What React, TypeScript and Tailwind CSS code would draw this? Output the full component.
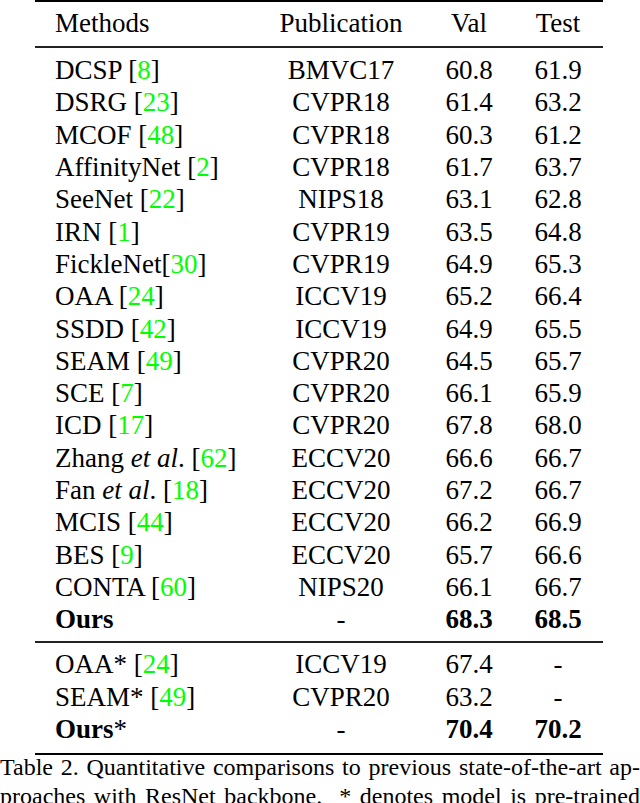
import React from "react";

type Row = {
  name: React.ReactNode;
  cite?: string;
  citeNoSpace?: boolean;
  pub: string;
  val: string;
  test: string;
  bold?: boolean;
};

const Cite = ({ n }: { n: string }) => (
  <>
    [<span className="text-[#00ff00]">{n}</span>]
  </>
);

const main: Row[] = [
  { name: "DCSP", cite: "8", pub: "BMVC17", val: "60.8", test: "61.9" },
  { name: "DSRG", cite: "23", pub: "CVPR18", val: "61.4", test: "63.2" },
  { name: "MCOF", cite: "48", pub: "CVPR18", val: "60.3", test: "61.2" },
  { name: "AffinityNet", cite: "2", pub: "CVPR18", val: "61.7", test: "63.7" },
  { name: "SeeNet", cite: "22", pub: "NIPS18", val: "63.1", test: "62.8" },
  { name: "IRN", cite: "1", pub: "CVPR19", val: "63.5", test: "64.8" },
  { name: "FickleNet", cite: "30", citeNoSpace: true, pub: "CVPR19", val: "64.9", test: "65.3" },
  { name: "OAA", cite: "24", pub: "ICCV19", val: "65.2", test: "66.4" },
  { name: "SSDD", cite: "42", pub: "ICCV19", val: "64.9", test: "65.5" },
  { name: "SEAM", cite: "49", pub: "CVPR20", val: "64.5", test: "65.7" },
  { name: "SCE", cite: "7", pub: "CVPR20", val: "66.1", test: "65.9" },
  { name: "ICD", cite: "17", pub: "CVPR20", val: "67.8", test: "68.0" },
  {
    name: (
      <>
        Zhang <i>et al</i>.
      </>
    ),
    cite: "62",
    pub: "ECCV20",
    val: "66.6",
    test: "66.7",
  },
  {
    name: (
      <>
        Fan <i>et al</i>.
      </>
    ),
    cite: "18",
    pub: "ECCV20",
    val: "67.2",
    test: "66.7",
  },
  { name: "MCIS", cite: "44", pub: "ECCV20", val: "66.2", test: "66.9" },
  { name: "BES", cite: "9", pub: "ECCV20", val: "65.7", test: "66.6" },
  { name: "CONTA", cite: "60", pub: "NIPS20", val: "66.1", test: "66.7" },
  { name: "Ours", pub: "-", val: "68.3", test: "68.5", bold: true },
];

const extra: Row[] = [
  { name: "OAA*", cite: "24", pub: "ICCV19", val: "67.4", test: "-" },
  { name: "SEAM*", cite: "49", pub: "CVPR20", val: "63.2", test: "-" },
  {
    name: (
      <>
        <b>Ours</b>*
      </>
    ),
    pub: "-",
    val: "70.4",
    test: "70.2",
  },
];

const grid = "grid grid-cols-[215px_142px_114px_64px] pl-[20px]";

function TableRow({ r, boldNums }: { r: Row; boldNums?: boolean }) {
  const b = r.bold || boldNums;
  return (
    <div className={`${grid} h-[32.3px] items-center leading-[32px]`}>
      <div className={`whitespace-nowrap ${r.bold ? "font-bold" : ""}`}>
        {r.name}
        {r.cite ? (
          <>
            {r.citeNoSpace ? "" : " "}
            <Cite n={r.cite} />
          </>
        ) : null}
      </div>
      <div className="text-center">{r.pub}</div>
      <div className={`text-center ${b ? "font-bold" : ""}`}>{r.val}</div>
      <div className={`text-center ${b ? "font-bold" : ""}`}>{r.test}</div>
    </div>
  );
}

export default function App() {
  return (
    <div
      className="w-[640px] bg-white text-black overflow-hidden"
      style={{ fontFamily: '"Liberation Serif", "Times New Roman", serif' }}
    >
      <div className="ml-[35px] w-[568px] text-[27px]">
        <div className="h-[2px] bg-black" />
        <div className={`${grid} pt-[5px] pb-[7px] leading-[32px]`}>
          <div>Methods</div>
          <div className="text-center">Publication</div>
          <div className="text-center">Val</div>
          <div className="text-center">Test</div>
        </div>
        <div className="h-[2px] bg-[#222]" />
        <div className="pt-[6px] pb-[6px]">
          {main.map((r, i) => (
            <TableRow key={i} r={r} />
          ))}
        </div>
        <div className="h-[2px] bg-[#222]" />
        <div className="pt-[5px] pb-[8px]">
          {extra.map((r, i) => (
            <TableRow key={i} r={r} boldNums={i === 2} />
          ))}
        </div>
        <div className="h-[2px] bg-black" />
      </div>
      <div className="mt-[-2px] text-[24px] leading-[29px] text-black">
        <div className="text-justify [text-align-last:justify] whitespace-nowrap">
          Table 2. Quantitative comparisons to previous state-of-the-art ap-
        </div>
        <div className="text-justify [text-align-last:justify]">
          proaches with ResNet backbone.&nbsp; * denotes model is pre-trained
        </div>
        <div>on MS-COCO.</div>
      </div>
    </div>
  );
}
